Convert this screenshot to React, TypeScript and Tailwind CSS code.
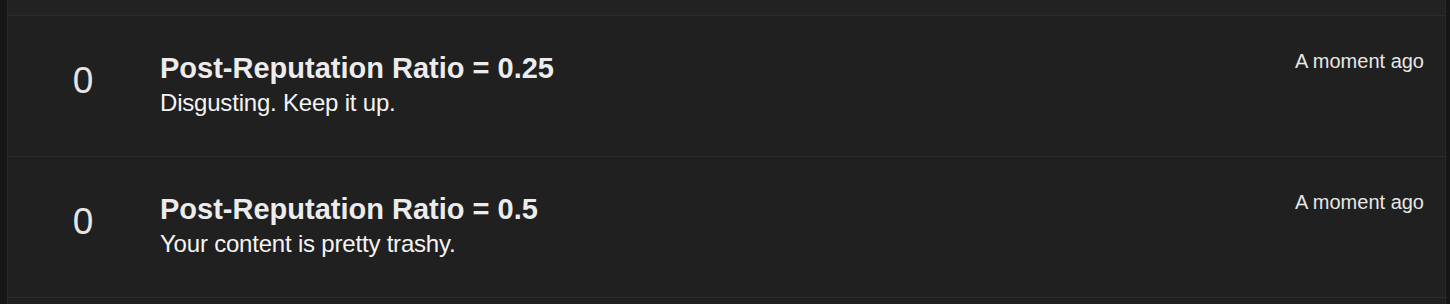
import React from "react";

const rows = [
  { score: 0, title: "Post-Reputation Ratio = 0.25", body: "Disgusting. Keep it up.", time: "A moment ago" },
  { score: 0, title: "Post-Reputation Ratio = 0.5", body: "Your content is pretty trashy.", time: "A moment ago" },
];

export default function App() {
  return (
    <div
      className="w-[1450px] h-[304px] bg-[#161616] flex overflow-hidden"
      style={{ fontFamily: '"Liberation Sans", Arial, sans-serif' }}
    >
      <div className="ml-[7px] w-[1439px] border-l border-r border-[#2a2a2a] bg-[#202020] flex flex-col">
        <div className="h-[15px] bg-[#222222] shrink-0" />
        {rows.map((r, i) => (
          <div key={i} className="h-[141px] shrink-0 border-t border-[#2c2c2c] flex items-start">
            <div className="w-[150px] shrink-0 pt-[45px] text-center text-[37px] leading-[40px] text-[#e6e6e6]">
              {r.score}
            </div>
            <div className="flex-1 pl-[2px] pt-[35px]">
              <div className="text-[29px] leading-[34px] font-bold text-[#ececec]">{r.title}</div>
              <div className="mt-[4px] text-[24px] leading-[28px] text-[#f4f4f4] tracking-[-0.2px]">{r.body}</div>
            </div>
            <div className="pt-[33px] pr-[21px] text-[20px] leading-[24px] text-[#e6e6e6]">{r.time}</div>
          </div>
        ))}
        <div className="flex-1 border-t border-[#2c2c2c]" />
      </div>
    </div>
  );
}
